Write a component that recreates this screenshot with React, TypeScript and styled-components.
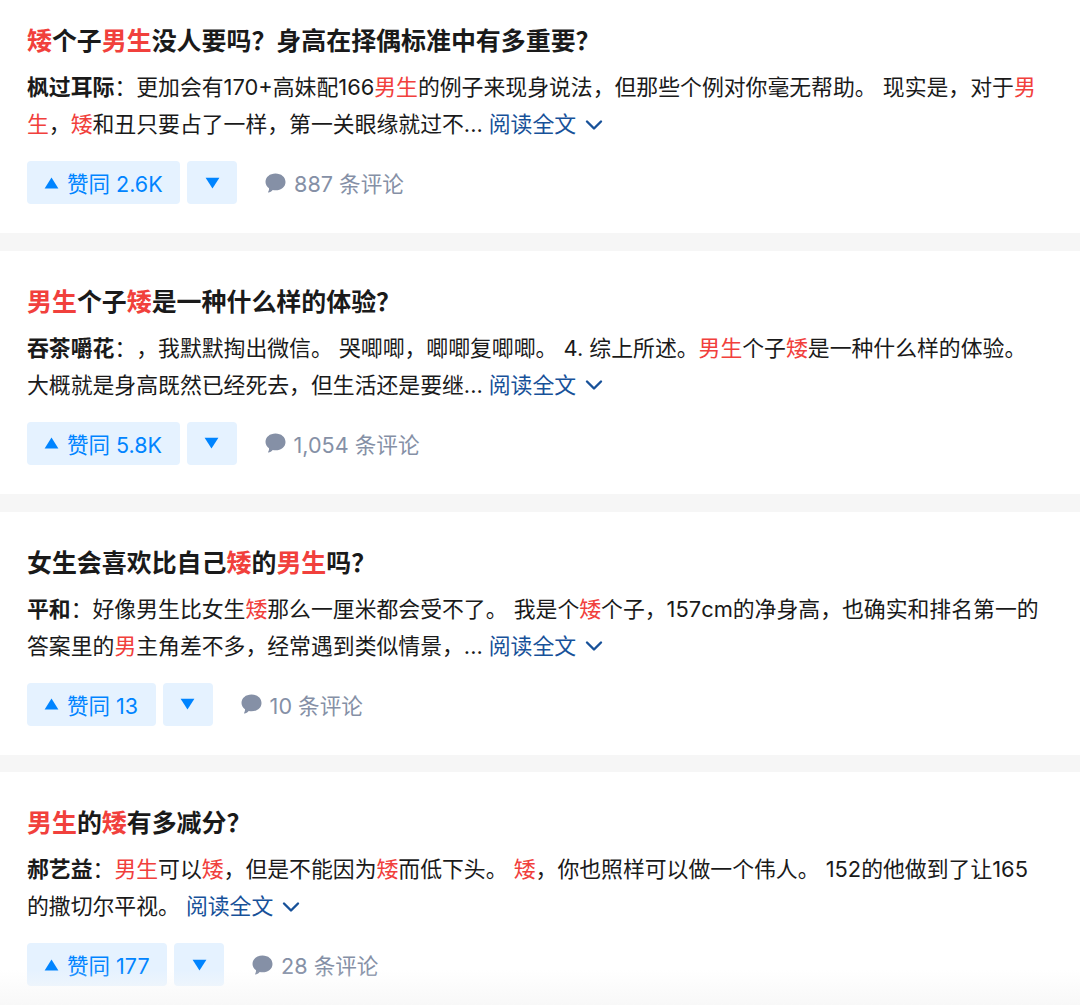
import { Fragment } from 'react';
import { styled, createGlobalStyle } from 'styled-components';

type Answer = {
  title: string;
  author: string;
  lines: string[];
  votes: string;
  comments: string;
};

// 《》 marks the highlighted keyword runs
const answers: Answer[] = [
  {
    title: '《矮》个子《男生》没人要吗\uFF1F身高在择偶标准中有多重要\uFF1F',
    author: '枫过耳际',
    lines: ['更加会有170+高妹配166《男生》的例子来现身说法\uFF0C但那些个例对你毫无帮助。 现实是\uFF0C对于《男》', '《生》\uFF0C《矮》和丑只要占了一样\uFF0C第一关眼缘就过不...'],
    votes: '2.6K',
    comments: '887 条评论',
  },
  {
    title: '《男生》个子《矮》是一种什么样的体验\uFF1F',
    author: '吞茶嚼花',
    lines: ['\uFF0C我默默掏出微信。 哭唧唧\uFF0C唧唧复唧唧。 4. 综上所述。《男生》个子《矮》是一种什么样的体验。', '大概就是身高既然已经死去\uFF0C但生活还是要继...'],
    votes: '5.8K',
    comments: '1,054 条评论',
  },
  {
    title: '女生会喜欢比自己《矮》的《男生》吗\uFF1F',
    author: '平和',
    lines: ['好像男生比女生《矮》那么一厘米都会受不了。 我是个《矮》个子\uFF0C157cm的净身高\uFF0C也确实和排名第一的', '答案里的《男》主角差不多\uFF0C经常遇到类似情景\uFF0C...'],
    votes: '13',
    comments: '10 条评论',
  },
  {
    title: '《男生》的《矮》有多减分\uFF1F',
    author: '郝艺益',
    lines: ['《男生》可以《矮》\uFF0C但是不能因为《矮》而低下头。 《矮》\uFF0C你也照样可以做一个伟人。 152的他做到了让165', '的撒切尔平视。'],
    votes: '177',
    comments: '28 条评论',
  },
];

const highlight = (text: string) =>
  text.split(/(《[^》]+》)/).filter(Boolean).map((part, i) =>
    part.startsWith('《') ? <Hit key={i}>{part.slice(1, -1)}</Hit> : <Fragment key={i}>{part}</Fragment>,
  );

const UpIcon = () => (
  <svg width="15" height="12" viewBox="0 0 15 12">
    <path d="M7.5 0.6 L14.4 11.4 H0.6 Z" fill="currentColor" />
  </svg>
);

const DownIcon = () => (
  <svg width="15" height="12" viewBox="0 0 15 12">
    <path d="M7.5 11.5 L0.6 0.8 H14.4 Z" fill="currentColor" />
  </svg>
);

const Chevron = () => (
  <svg width="18" height="12" viewBox="0 0 18 12">
    <path d="M2 2.5 L9 9.5 L16 2.5" fill="none" stroke="currentColor" strokeWidth="2.4" strokeLinecap="round" strokeLinejoin="round" />
  </svg>
);

const BubbleIcon = () => (
  <svg width="21" height="20" viewBox="0 0 21 20">
    <path
      d="M10.5 0.5 C16.2 0.5 20.5 4 20.5 9 C20.5 14 16.2 17.3 10.5 17.3 C9.5 17.3 8.6 17.2 7.7 17 C6.6 18.2 5 19.4 3.4 19.5 C3 19.5 2.9 19.2 3.1 18.9 C3.8 17.9 4.2 16.4 4 15.2 C1.9 13.7 0.5 11.5 0.5 9 C0.5 4 4.8 0.5 10.5 0.5 Z"
      fill="currentColor"
    />
  </svg>
);

const App = () => {
  return (
    <>
      <GlobalStyle />
      <Feed>
        {answers.map((a) => (
          <Card key={a.title}>
            <Title>{highlight(a.title)}</Title>
            <Excerpt>
              <Line>
                <Author>{a.author}</Author>
                {'\uFF1A'}
                {highlight(a.lines[0])}
              </Line>
              <Line>
                {highlight(a.lines[1])}
                <ReadMore>
                  阅读全文
                  <Chevron />
                </ReadMore>
              </Line>
            </Excerpt>
            <Actions>
              <VoteButton>
                <UpIcon />
                赞同 {a.votes}
              </VoteButton>
              <VoteDown>
                <DownIcon />
              </VoteDown>
              <Comments>
                <BubbleIcon />
                {a.comments}
              </Comments>
            </Actions>
          </Card>
        ))}
      </Feed>
    </>
  );
};

export default App;

const GlobalStyle = createGlobalStyle`
  html, body {
    margin: 0;
    padding: 0;
    background: #f6f6f6;
  }
  body {
    font-family: "Inter", "Noto Sans CJK SC", sans-serif;
    text-spacing-trim: space-all;
    overflow: hidden;
  }
`;

const Feed = styled.main`
  position: relative;
  display: flex;
  flex-direction: column;
  gap: 17.8px;
  height: 1015px;
  margin-top: -10px;
  overflow: hidden;

  /* the screenshot fades out slightly at its bottom edge */
  &::after {
    content: '';
    position: absolute;
    left: 0;
    right: 0;
    bottom: 0;
    height: 35px;
    background: linear-gradient(rgba(248, 248, 248, 0), #f8f8f8);
  }
`;

const Card = styled.article`
  flex: none;
  height: 243px;
  padding: 34px 0 0 27px;
  box-sizing: border-box;
  background: #fff;
`;

const Title = styled.h2`
  margin: 0;
  font-size: 24.95px;
  line-height: 34px;
  font-weight: 700;
  color: #1a1a1a;
`;

const Hit = styled.span`
  color: #f1403c;
`;

const Excerpt = styled.div`
  margin-top: 11px;
  font-size: 21.85px;
  line-height: 37px;
  color: #1a1a1a;
`;

const Line = styled.div`
  white-space: nowrap;
`;

const Author = styled.b`
  font-weight: 700;
`;

const ReadMore = styled.span`
  display: inline-flex;
  align-items: center;
  gap: 9px;
  margin-left: 6px;
  color: #175199;
`;

const Actions = styled.div`
  display: flex;
  align-items: center;
  margin-top: 18px;
`;

const VoteButton = styled.div`
  display: flex;
  align-items: center;
  gap: 8px;
  height: 43px;
  padding: 0 17.5px 0 17px;
  border-radius: 4px;
  background: #e5f2ff;
  color: #0084ff;
  font-size: 21.5px;
`;

const VoteDown = styled(VoteButton)`
  margin-left: 7px;
  padding: 0 17.5px;
`;

const Comments = styled.div`
  display: flex;
  align-items: center;
  gap: 8px;
  margin-left: 28px;
  color: #8590a6;
  font-size: 21.6px;
`;
